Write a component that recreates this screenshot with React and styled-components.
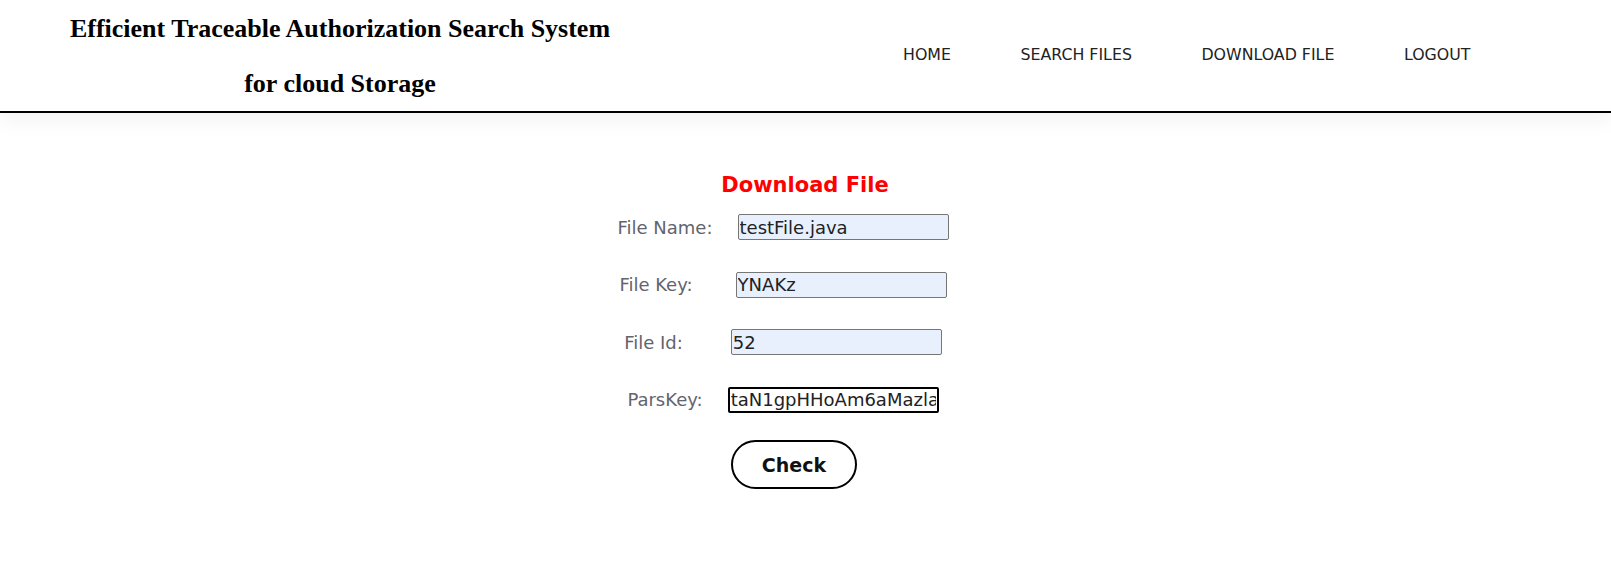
import React from "react";
import styled, { createGlobalStyle } from "styled-components";

const GlobalStyle = createGlobalStyle`
  html, body {
    margin: 0;
    padding: 0;
    background: #ffffff;
  }
  body {
    font-family: "DejaVu Sans", "Open Sans", sans-serif;
  }
`;

const Header = styled.header`
  display: flex;
  align-items: center;
  height: 111px;
  border-bottom: 2px solid #000;
  box-shadow: 0 8px 20px rgba(0, 0, 0, 0.05);
  background: #fff;
`;

const TitleBox = styled.div`
  width: 680px;
  text-align: center;
  font-family: "Liberation Serif", "Times New Roman", serif;
  font-weight: bold;
  font-size: 26px;
  line-height: 55px;
  color: #000;
`;

const Nav = styled.nav`
  display: flex;
  gap: 69.5px;
  margin-left: 223px;
  margin-bottom: 2px;
`;

const NavLink = styled.a`
  font-size: 15.8px;
  color: #222;
  text-decoration: none;
`;

const Main = styled.main`
  display: flex;
  flex-direction: column;
  align-items: center;
  padding-top: 58px;
`;

const Heading = styled.h2`
  margin: 0 0 15px -1px;
  color: #ff0000;
  font-size: 21px;
  font-weight: bold;
  line-height: 28px;
`;

const Row = styled.div`
  display: flex;
  align-items: center;
  gap: ${(p) => p.gap}px;
  margin: 0 0 31.5px -45px;
`;

const Label = styled.label`
  color: #63636d;
  font-size: 18px;
`;

const Input = styled.input`
  box-sizing: border-box;
  width: 211px;
  height: 26px;
  padding: 0 1px;
  font-family: "DejaVu Sans", sans-serif;
  font-size: 18px;
  color: #222;
  background: ${(p) => (p.focused ? "#fff" : "#e8f0fe")};
  border: ${(p) => (p.focused ? "2px solid #000" : "1px solid #767676")};
  border-radius: 2px;
  outline: none;
`;

const Button = styled.button`
  box-sizing: border-box;
  width: 126px;
  height: 49px;
  margin: -4px 0 0 -23px;
  background: #fff;
  border: 2px solid #000;
  border-radius: 25px;
  font-family: "DejaVu Sans", sans-serif;
  font-size: 19px;
  font-weight: bold;
  color: #111;
`;

const fields = [
  { label: "File Name:", value: "testFile.java", gap: 25 },
  { label: "File Key:", value: "YNAKz", gap: 43 },
  { label: "File Id:", value: "52", gap: 48 },
  { label: "ParsKey:", value: "taN1gpHHoAm6aMazlaI", gap: 25, focused: true },
];

export default function App() {
  return (
    <>
      <GlobalStyle />
      <Header>
        <TitleBox>
          <div>Efficient Traceable Authorization Search System</div>
          <div>for cloud Storage</div>
        </TitleBox>
        <Nav>
          <NavLink href="#">HOME</NavLink>
          <NavLink href="#">SEARCH FILES</NavLink>
          <NavLink href="#">DOWNLOAD FILE</NavLink>
          <NavLink href="#">LOGOUT</NavLink>
        </Nav>
      </Header>
      <Main>
        <Heading>Download File</Heading>
        {fields.map((f) => (
          <Row key={f.label} gap={f.gap}>
            <Label>{f.label}</Label>
            <Input readOnly value={f.value} focused={f.focused} />
          </Row>
        ))}
        <Button>Check</Button>
      </Main>
    </>
  );
}
